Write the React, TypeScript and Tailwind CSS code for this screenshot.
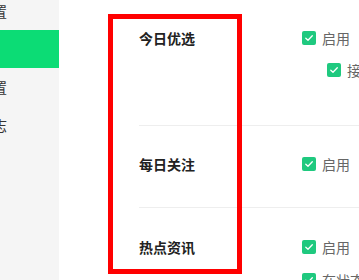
import React from "react";

const font = { fontFamily: '"Noto Sans CJK SC", "Noto Sans", sans-serif' };

function Check({ label }: { label: string }) {
  return (
    <div className="flex h-5 items-center gap-[6px] whitespace-nowrap">
      <span className="flex h-[14px] w-[14px] shrink-0 items-center justify-center rounded-[2px] bg-[#1fc97f]">
        <svg width="10" height="10" viewBox="0 0 10 10" fill="none">
          <path d="M1.8 5.2 L4 7.3 L8.3 2.8" stroke="white" strokeWidth="1.3" strokeLinecap="round" strokeLinejoin="round" />
        </svg>
      </span>
      <span className="text-[14px] leading-5 text-[#666]">{label}</span>
    </div>
  );
}

const menu = ["基础设置", "推送设置", "高级设置", "运行日志"];

export default function App() {
  return (
    <div className="relative flex h-[280px] w-[359px] overflow-hidden bg-white" style={font}>
      {/* sidebar, scrolled so only the ends of the labels show */}
      <div className="flex w-[59px] shrink-0 flex-col bg-[#f5f5f5] -mt-0">
        <div className="-mt-[8px]">
          {menu.map((m, i) => (
            <div
              key={m}
              className={
                "flex h-[38px] items-center overflow-hidden whitespace-nowrap text-[14px] " +
                (i === 1 ? "bg-[#0cdc75] text-white" : "text-[#333]")
              }
            >
              <span className={i === 1 ? "-ml-[90px]" : "-ml-[49px]"}>{m}</span>
            </div>
          ))}
        </div>
      </div>

      {/* settings */}
      <div className="flex-1 pl-[80px]">
        <div className="flex pt-[28px] pb-[45px] border-b border-[#eeeeee]">
          <div className="w-[163px] shrink-0 h-5 flex items-center text-[14px] font-bold text-[#222]">今日优选</div>
          <div className="flex flex-col gap-[12px]">
            <Check label="启用" />
            <div className="pl-[25px]">
              <Check label="接收推送" />
            </div>
          </div>
        </div>
        <div className="flex pt-[28px] pb-[33px] border-b border-[#eeeeee]">
          <div className="w-[163px] shrink-0 h-5 flex items-center text-[14px] font-bold text-[#222]">每日关注</div>
          <Check label="启用" />
        </div>
        <div className="flex pt-[29px]">
          <div className="w-[163px] shrink-0 h-5 flex items-center text-[14px] font-bold text-[#222]">热点资讯</div>
          <div className="flex flex-col gap-[13px]">
            <Check label="启用" />
            <Check label="在状态栏显示" />
          </div>
        </div>
      </div>

      {/* annotation box */}
      <div className="pointer-events-none absolute left-[108px] top-[14px] h-[260px] w-[134px] border-[5px] border-[#ff0000]" />
    </div>
  );
}
